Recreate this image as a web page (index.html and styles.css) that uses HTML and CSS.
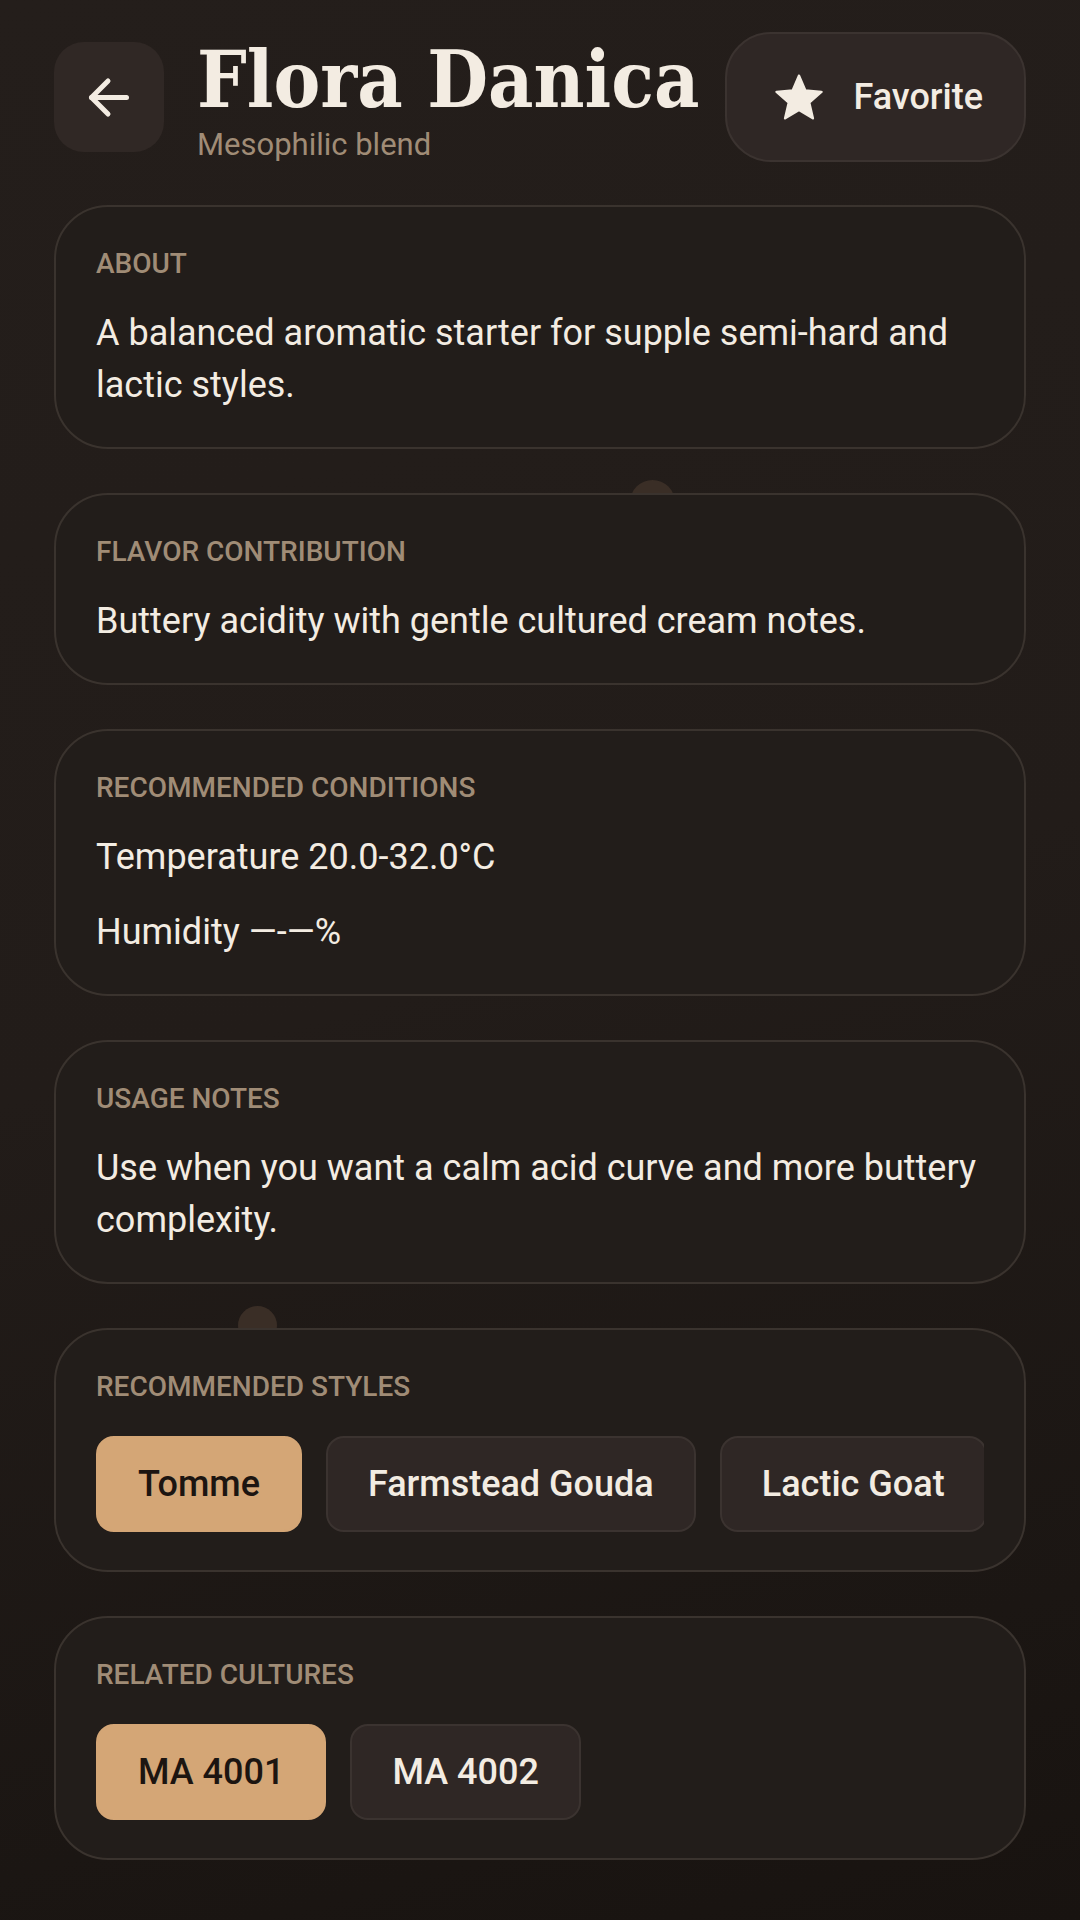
FILE: index.html
```html
<!DOCTYPE html>
<html lang="en">
<head>
    <meta charset="UTF-8">
    <meta name="viewport" content="width=device-width, initial-scale=1.0">
    <title>Flora Danica</title>
    <link rel="stylesheet" href="styles.css">
</head>
<body>
    <div class="screen">
        <span class="dot dot-one"></span>
        <span class="dot dot-two"></span>

        <header class="top-bar">
            <button class="back-button" aria-label="Back">
                <svg width="48" height="48" viewBox="0 0 48 48" fill="none" stroke="#f3ece2" stroke-width="5" stroke-linecap="round" stroke-linejoin="round">
                    <path d="M41.5 24.5H6.5"/>
                    <path d="M23 8L6.5 24.5L23 41"/>
                </svg>
            </button>
            <div class="title-block">
                <h1 class="title">Flora Danica</h1>
                <p class="subtitle">Mesophilic blend</p>
            </div>
            <button class="fav-button">
                <svg width="48" height="46" viewBox="1.3 1.3 21.4 20.4">
                    <path d="M12 17.27L18.18 21l-1.64-7.03L22 9.24l-7.19-.61L12 2 9.19 8.63 2 9.24l5.46 4.73L5.82 21z" fill="#f3ece2" stroke="#f3ece2" stroke-width="1.1" stroke-linejoin="round"/>
                </svg>
                <span>Favorite</span>
            </button>
        </header>

        <section class="card">
            <h2 class="card-label">ABOUT</h2>
            <p class="card-text">A balanced aromatic starter for supple semi-hard and lactic styles.</p>
        </section>

        <section class="card">
            <h2 class="card-label">FLAVOR CONTRIBUTION</h2>
            <p class="card-text">Buttery acidity with gentle cultured cream notes.</p>
        </section>

        <section class="card">
            <h2 class="card-label">RECOMMENDED CONDITIONS</h2>
            <div class="rows">
                <p class="card-text">Temperature 20.0-32.0°C</p>
                <p class="card-text">Humidity —-—%</p>
            </div>
        </section>

        <section class="card">
            <h2 class="card-label">USAGE NOTES</h2>
            <p class="card-text">Use when you want a calm acid curve and more buttery complexity.</p>
        </section>

        <section class="card">
            <h2 class="card-label">RECOMMENDED STYLES</h2>
            <div class="chips">
                <span class="chip chip-active">Tomme</span>
                <span class="chip">Farmstead Gouda</span>
                <span class="chip">Lactic Goat</span>
            </div>
        </section>

        <section class="card">
            <h2 class="card-label">RELATED CULTURES</h2>
            <div class="chips">
                <span class="chip chip-active">MA 4001</span>
                <span class="chip">MA 4002</span>
            </div>
        </section>
    </div>
</body>
</html>
```

FILE: styles.css
```css
body {
    margin: 0;
    min-height: 1920px;
    background: linear-gradient(165deg, #241e1b 0%, #221c19 50%, #1b1613 85%, #181310 100%);
    font-family: 'Roboto', 'Noto Sans', sans-serif;
    color: #f3ece2;
}

.screen {
    position: relative;
    padding: 32px 54px;
    display: flex;
    flex-direction: column;
    gap: 44px;
}

.dot {
    position: absolute;
    border-radius: 50%;
    background-color: #3a2e26;
    z-index: 0;
}

.dot-one {
    left: 630px;
    top: 480px;
    width: 45px;
    height: 45px;
}

.dot-two {
    left: 238px;
    top: 1306px;
    width: 39px;
    height: 39px;
}

.top-bar {
    display: flex;
    align-items: center;
    gap: 33px;
    height: 130px;
    margin-bottom: -1px;
    position: relative;
    z-index: 1;
}

.back-button {
    width: 110px;
    height: 110px;
    flex-shrink: 0;
    border: none;
    border-radius: 30px;
    background-color: #302825;
    display: flex;
    align-items: center;
    justify-content: center;
    padding: 0;
}

.title-block {
    flex: 1;
    min-width: 0;
    padding-top: 6px;
}

.title {
    margin: 0;
    font-family: 'DejaVu Serif', serif;
    font-stretch: condensed;
    font-weight: bold;
    font-size: 78px;
    line-height: 84px;
    color: #f3ece2;
    white-space: nowrap;
}

.subtitle {
    margin: 5px 0 0;
    font-size: 31px;
    line-height: 36px;
    color: #a08c76;
}

.fav-button {
    flex-shrink: 0;
    height: 130px;
    display: flex;
    align-items: center;
    gap: 30px;
    padding: 0 41px 0 48px;
    border: 2px solid #3b3330;
    border-radius: 46px;
    background-color: #2f2725;
    color: #f3ece2;
    font-family: 'Roboto', sans-serif;
    font-weight: 500;
    font-size: 36px;
}

.card {
    position: relative;
    z-index: 1;
    background-color: #221d1a;
    border: 2px solid #3a332e;
    border-radius: 54px;
    padding: 40px 40px 36px;
}

.card-label {
    margin: 0;
    font-size: 28px;
    line-height: 34px;
    font-weight: 500;
    color: #a08c76;
}

.card-text {
    margin: 26px 0 0;
    font-size: 36px;
    line-height: 52px;
    color: #f3ece2;
}

.rows .card-text + .card-text {
    margin-top: 23px;
}

.chips {
    display: flex;
    gap: 24px;
    margin-top: 32px;
    padding-bottom: 2px;
    overflow: hidden;
}

.chip {
    flex-shrink: 0;
    white-space: nowrap;
    padding: 25px 40px;
    line-height: 42px;
    font-size: 36px;
    font-weight: 500;
    border: 2px solid #3b3330;
    border-radius: 18px;
    background-color: #2f2725;
    color: #f3ece2;
}

.chip-active {
    background-color: #d4a676;
    border-color: #d4a676;
    color: #1c1511;
}
```
